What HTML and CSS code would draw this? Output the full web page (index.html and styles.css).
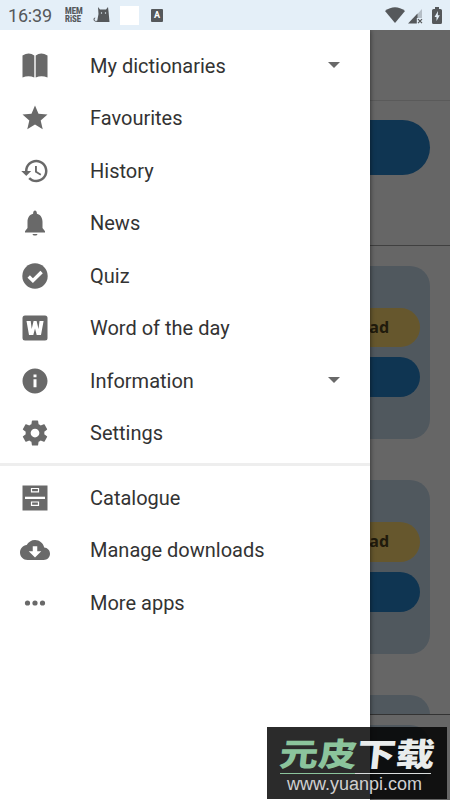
FILE: index.html
```html
<!DOCTYPE html>
<html lang="en">
<head>
<meta charset="utf-8">
<title>Dictionaries</title>
<link rel="stylesheet" href="styles.css">
</head>
<body>
<div class="phone">
  <header class="status">
    <span class="clock">16:39</span>
    <div class="memrise"><span>MEM</span><span>RiSE</span></div>
    <svg class="cat" viewBox="0 0 17 16"><path d="M5 0l2 2.500h6L15 0l.6 5L16.500 15H4L5.500 7z"/><path class="tail" d="M5 14.300H2.500Q.5 14 1 11.500l1.200-.5"/><circle class="eye" cx="8.500" cy="6" r=".7"/><circle class="eye" cx="12.500" cy="6" r=".7"/></svg>
    <span class="blank"></span>
    <span class="letter">A</span>
    <svg class="wifi" viewBox="0 0 20 16"><path d="M0 4Q10-3.500 20 4L10 16z"/></svg>
    <svg class="signal" viewBox="0 0 15 15"><path class="weak" d="M8 6.500L14 0v9H8z"/><path d="M0 14.500L9.500 4.500v10z"/><path class="cut" d="M8.800 9H15v6H8.800z"/><path class="cross" d="M10 10.200l4 4m0-4l-4 4"/></svg>
    <svg class="battery" viewBox="0 0 10 17"><path d="M3 0h4v2h1.500Q10 2 10 3.500v12Q10 17 8.500 17h-7Q0 17 0 15.500v-12Q0 2 1.500 2H3z"/><path class="bolt" d="M6 4L2.500 10H4.500v4L7.800 8.300H5.800z"/></svg>
  </header>
  <main class="stage">
    <div class="app">
      <div class="toolbar"></div>
      <div class="search"><div class="pill"></div></div>
      <div class="feed">
        <section class="card"><div class="button gold">Download</div><div class="button blue"></div></section>
        <section class="card"><div class="button gold">Download</div><div class="button blue"></div></section>
        <section class="card"></section>
      </div>
      <div class="bottom"><div class="tab"></div></div>
    </div>
    <div class="scrim"></div>
    <nav class="drawer">
      <ul class="menu">
        <li><svg viewBox="0 0 30 30"><path d="M2.500 4.500Q9 .5 14.300 4.500V26.500Q8.500 24 2.500 26.500zM15.700 4.500Q21 .5 27.500 4.500V26.500Q21.500 24 15.700 26.500z"/></svg><span>My dictionaries</span><i class="caret"></i></li>
        <li><svg viewBox="0 0 24 24"><path d="M12 17.270L18.180 21l-1.640-7.030L22 9.240l-7.190-.61L12 2 9.190 8.630 2 9.240l5.460 4.730L5.820 21z"/></svg><span>Favourites</span></li>
        <li><svg viewBox="0 0 24 24"><path d="M13 3c-4.970 0-9 4.030-9 9H1l3.890 3.890.07.14L9 12H6c0-3.870 3.130-7 7-7s7 3.130 7 7-3.130 7-7 7c-1.930 0-3.680-.79-4.940-2.060l-1.420 1.420C8.270 19.990 10.510 21 13 21c4.970 0 9-4.030 9-9s-4.030-9-9-9zm-1 5v5l4.280 2.540.72-1.210-3.500-2.080V8H12z"/></svg><span>History</span></li>
        <li><svg viewBox="0 0 24 24"><path d="M12 22c1.100 0 2-.6 2-1.300h-4c0 .7.900 1.300 2 1.300zm6-6v-5c0-3.070-1.640-5.640-4.500-6.320V4c0-.83-.67-2-1.500-2s-1.500 1.170-1.500 2v.68C7.630 5.360 6 7.920 6 11v5l-2 2.500v1h16v-1z"/></svg><span>News</span></li>
        <li><svg viewBox="0 0 30 30"><circle cx="15" cy="15" r="12.700"/><path class="check" d="M8.700 15.500l4.200 4.200 8.700-8.700"/></svg><span>Quiz</span></li>
        <li><svg viewBox="0 0 30 30"><rect x="2.500" y="2.500" width="25" height="25" rx="2.500"/><path class="hole" d="M6.500 8h4.200l1 8 1.900-8h3l1.900 8 1-8h4.100L21 22h-4.300L15 15.500 13.300 22H9z"/></svg><span>Word of the day</span></li>
        <li><svg viewBox="0 0 24 24"><path d="M12 2C6.480 2 2 6.480 2 12s4.480 10 10 10 10-4.480 10-10S17.520 2 12 2zm1.200 15h-2.400v-6.500h2.400V17zm0-8h-2.400V6.700h2.400V9z"/></svg><span>Information</span><i class="caret"></i></li>
        <li><svg viewBox="0 0 24 24"><path d="M19.430 12.980c.04-.32.070-.64.070-.98s-.03-.66-.07-.98l2.110-1.650c.19-.15.240-.42.120-.64l-2-3.460c-.12-.22-.39-.3-.61-.22l-2.490 1c-.52-.4-1.080-.73-1.690-.98l-.38-2.650C14.460 2.180 14.250 2 14 2h-4c-.25 0-.46.180-.49.420l-.38 2.650c-.61.250-1.170.590-1.690.98l-2.490-1c-.23-.09-.49 0-.61.220l-2 3.460c-.13.220-.07.490.12.640l2.110 1.650c-.04.320-.07.650-.07.980s.030.660.070.980l-2.110 1.650c-.19.150-.24.420-.12.640l2 3.460c.12.220.390.300.610.220l2.490-1c.52.400 1.080.730 1.690.980l.38 2.650c.03.240.240.420.490.420h4c.25 0 .46-.18.490-.42l.38-2.650c.61-.25 1.170-.59 1.690-.98l2.490 1c.23.090.490 0 .610-.22l2-3.460c.12-.22.070-.49-.12-.64zM12 15.500c-1.930 0-3.500-1.570-3.500-3.500s1.570-3.500 3.500-3.500 3.500 1.570 3.500 3.500-1.570 3.500-3.500 3.500z"/></svg><span>Settings</span></li>
      </ul>
      <ul class="menu more">
        <li><svg viewBox="0 0 30 30"><path d="M2.500 2.500h25v25h-25z"/><path class="hole" d="M5 13.700h20v2.300H5z"/><path class="handle" d="M11.500 5.500h7v3.400h-7zM11.500 19h7v3.400h-7z"/></svg><span>Catalogue</span></li>
        <li><svg viewBox="0 0 24 24"><path d="M19.350 10.040C18.670 6.590 15.640 4 12 4 9.110 4 6.600 5.640 5.350 8.040 2.340 8.360 0 10.910 0 14c0 3.310 2.690 6 6 6h13c2.760 0 5-2.240 5-5 0-2.640-2.050-4.780-4.650-4.960zM17 13l-5 5-5-5h3.200V9h3.600v4H17z"/></svg><span>Manage downloads</span></li>
        <li><svg viewBox="0 0 30 30"><circle cx="7.500" cy="15" r="2.600"/><circle cx="15" cy="15" r="2.600"/><circle cx="22.500" cy="15" r="2.600"/></svg><span>More apps</span></li>
      </ul>
    </nav>
  </main>
  <aside class="watermark">
    <div class="brand"><span class="mint">元皮</span><span>下载</span></div>
    <div class="rule"></div>
    <div class="url">www.yuanpi.com</div>
  </aside>
</div>
</body>
</html>
```
FILE: styles.css
```css
* { box-sizing: border-box; }
body { margin: 0; font-family: Roboto, "Liberation Sans", sans-serif; }
.phone { position: relative; width: 450px; height: 800px; overflow: hidden; display: flex; flex-direction: column; background: #fff; }

.status { height: 30px; flex: none; display: flex; align-items: center; background: #e4eff8; padding: 0 8px; color: #55585b; }
.status svg { fill: #55585b; flex: none; }
.clock { width: 57px; font-size: 18px; line-height: 30px; letter-spacing: -.2px; padding-top: 2px; }
.memrise { width: 19px; display: flex; flex-direction: column; font: 900 9.500px/8px Roboto, sans-serif; }
.memrise span { height: 8px; width: max-content; transform-origin: 0 50%; transform: scaleX(.8); }
.cat { width: 17px; height: 16px; margin-left: 9px; }
.status .tail { fill: none; stroke: #55585b; stroke-width: 1; }
.status .eye, .status .cut, .status .bolt { fill: #e4eff8; }
.blank { width: 19px; height: 19px; margin-left: 10px; background: #fff; }
.letter { width: 12px; height: 13px; margin: 1px 0 0 12px; border-radius: 1px; background: #55585b; color: #fff; font-size: 9px; line-height: 13px; font-weight: 700; text-align: center; }
.wifi { width: 20px; height: 16px; margin-left: auto; }
.signal { width: 15px; height: 15px; margin: 2px 0 0 3px; }
.status .weak { fill: #b5bec6; }
.status .cross { fill: none; stroke: #55585b; stroke-width: 1.200; }
.battery { width: 10px; height: 17px; margin-left: 9px; }

.stage { position: relative; flex: 1; min-height: 0; }
.app { height: 100%; display: flex; flex-direction: column; background: #fff; }
.toolbar { height: 71px; flex: none; border-bottom: 1px solid #e2e2e2; }
.search { height: 145px; flex: none; padding: 19px 20px; border-bottom: 1px solid #a0a0a0; }
.pill { height: 55px; border-radius: 28px; background: #2684cc; }
.feed { flex: 1; min-height: 0; overflow: hidden; display: flex; flex-direction: column; gap: 41px; padding: 19.500px 20px 0; }
.card { height: 173.500px; flex: none; border-radius: 20px; background: #c8dcec; padding: 42px 10px; display: flex; flex-direction: column; gap: 10px; }
.button { height: 40px; border-radius: 20px; padding: 0 31px; font: 700 16px/39px "Noto Sans", sans-serif; text-align: right; color: #504420; }
.gold { background: #ffd970; }
.blue { background: #2684cc; }
.bottom { height: 86px; flex: none; border-top: 1px solid #808080; padding: 10px 20px; }
.tab { height: 60px; border-radius: 20px; background: #c8dcec; }
.scrim { position: absolute; inset: 0; background: rgba(0, 0, 0, .6); }

.drawer { position: absolute; left: 0; top: 0; bottom: 0; width: 370px; background: #fff; padding-top: 9.250px; box-shadow: 0 0 5px rgba(0, 0, 0, .6); clip-path: inset(0 -8px 0 0); }
.menu { list-style: none; margin: 0; padding: 0 0 4px; }
.more { border-top: 3px solid #eee; padding-top: 5.250px; }
.menu li { height: 52.500px; display: flex; align-items: center; padding: 0 30px 0 20px; color: #333; font-size: 20px; }
.menu svg { width: 30px; height: 30px; margin-right: 40px; fill: #696969; }
.menu .check { fill: none; stroke: #fff; stroke-width: 3.400; }
.menu .hole { fill: #fff; }
.menu .handle { fill: none; stroke: #fff; stroke-width: 1.200; }
.caret { margin: 0 0 2px auto; border: 6.500px solid transparent; border-top-color: #696969; border-bottom: 0; }

.watermark { position: absolute; left: 267px; top: 727px; width: 180px; height: 72px; padding: 9px 13px 0; background: rgba(0, 0, 0, .83); }
.brand { display: flex; width: 128px; height: 34px; font: 900 32px/32px "Noto Sans CJK SC", sans-serif; color: #e9ecec; white-space: nowrap; transform-origin: 0 50%; transform: scaleX(1.21) skewX(-5deg); }
.mint { color: #8bc49c; }
.rule { height: 1px; width: 151px; margin-top: 3px; background: linear-gradient(90deg, #8bc49c 50%, #d9dddd 50%); }
.url { padding-left: 7px; font: 18px/20px "Liberation Sans", sans-serif; color: #d0d0d0; white-space: nowrap; }
```
